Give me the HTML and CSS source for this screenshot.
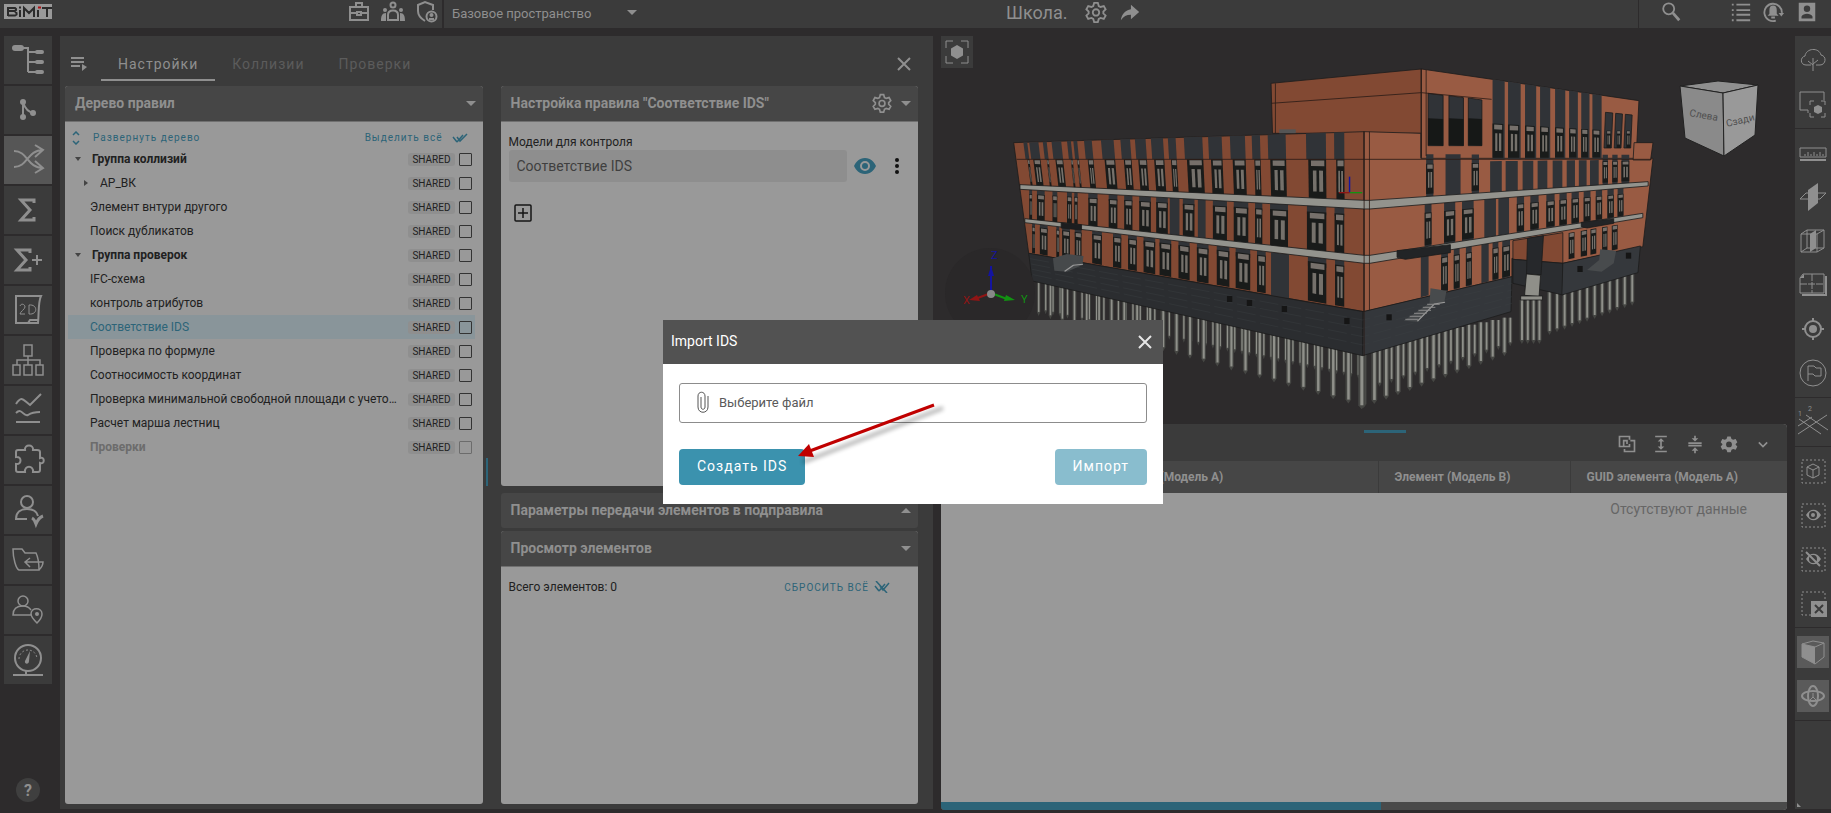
FILE: index.html
```html
<!DOCTYPE html>
<html lang="ru">

<head>
    <meta charset="utf-8">
    <title>BIMIT</title>
    <link rel="stylesheet" href="styles.css">
</head>

<body>
    <header class="topbar">
        <a class="logo" href="#" aria-label="BIMIT">
            <svg width="48" height="15" viewBox="0 0 48 15" fill="none" stroke="#2b2b2b" stroke-width="2">
                <path d="M4 3v9M4 4h7l1 1v1l-1 1H5M11 7.500l1.500 1.500v1.500L11 11.500H4M16 6v7M20 13V4l5 5 5-5v9M34 6v7M38 4h10M43 4v9" />
                <path d="M15 3.500h2" />
                <path d="M37 3.500h-3" stroke="#b01015" />
            </svg>
        </a>
        <nav class="top-left">
            <button class="tool" aria-label="Проекты"><svg viewBox="0 0 24 24" width="24" height="24"><path d="M3 8h18v13H3zM9 8V4h6v4M3 14h7M14 14h7M10 13h4v3h-4z" /></svg></button>
            <button class="tool" aria-label="Команда"><svg viewBox="0 0 24 24" width="24" height="24"><circle cx="12" cy="6" r="2.500" /><path d="M7 21v-5c0-3 2-4.500 5-4.500s5 1.500 5 4.500v5z" /><g class="fill"><circle cx="4" cy="11" r="2" /><circle cx="20" cy="11" r="2" /><path d="M0 22c0-5 1-8 5-8v8zM24 22c0-5-1-8-5-8v8z" /></g></svg></button>
            <button class="tool" aria-label="Права"><svg viewBox="0 0 24 24" width="24" height="24"><path d="M10 22C5 19 3 16 3 12V6l7-3 8 3v5" /><circle cx="16.500" cy="17.500" r="5" /><circle cx="16.500" cy="16" r="1" /><path d="M14 20h5" /></svg></button>
        </nav>
        <label class="space-select">
            <select aria-label="Пространство">
                <option>Базовое пространство</option>
            </select>
            <span class="caret"></span>
        </label>
        <div class="project">
            <span class="project-name">Школа.</span>
            <button class="tool" aria-label="Настройки проекта"><svg viewBox="0 0 24 24" width="24" height="24"><use href="#gear" /></svg></button>
            <button class="tool" aria-label="Поделиться"><svg class="fill" viewBox="0 0 24 24" width="24" height="24"><path d="M13 4l9 8-9 8v-5c-5 0-8 2-11 6 1-7 5-11 11-12z" /></svg></button>
        </div>
        <div class="top-right">
            <button class="tool" aria-label="Поиск"><svg viewBox="0 0 24 24" width="24" height="24"><circle cx="9.500" cy="8.500" r="6" /><path d="M14 13l7 8" stroke-width="3" /></svg></button>
            <span class="spring"></span>
            <button class="tool" aria-label="Список"><svg viewBox="0 0 24 24" width="24" height="24"><path d="M7 4h15M7 10h15M7 15h15M7 21h15M2 4h2M2 10h2M2 15h2M2 21h2" /></svg></button>
            <button class="tool" aria-label="Уведомления"><svg viewBox="0 0 24 24" width="24" height="24"><path d="M14 21.500A9.500 9.500 0 1 1 20.500 13" /><path class="fill" d="M17 13h6l-3 4zM11 5c-3 0-4 2-4 5v4l-2 2h12l-2-2v-4c0-3-1-5-4-5zM9 17h4v2H9z" /></svg></button>
            <button class="tool" aria-label="Профиль"><svg viewBox="0 0 24 24" width="24" height="24"><path class="fill" fill-rule="evenodd" d="M3 2h18v20H3zM12 5a3.500 3.500 0 1 0 0 7 3.500 3.500 0 0 0 0-7zM6 19h12v-2c-2-4-10-4-12 0z" /></svg></button>
        </div>
    </header>

    <main class="workspace">
        <aside class="rail">
            <button class="rail-btn" aria-label="Структура"><svg class="ic" viewBox="0 0 48 48"><path d="M16 12h8v24M24 16h8M24 26h8M24 36h8" stroke-width="2" /><path d="M11 12h6" stroke-width="6" stroke-linecap="round" /><path d="M33 16h5M33 26h5M33 36h5" stroke-width="4" stroke-linecap="round" /></svg></button>
            <button class="rail-btn" aria-label="Связи"><svg class="ic" viewBox="0 0 48 48"><path d="M19 16v16M19 16c2 7 5 11 12 11" stroke-width="2" /><g class="fill"><circle cx="19" cy="16" r="3" /><circle cx="19" cy="31" r="3" /><circle cx="29" cy="27" r="3" /></g></svg></button>
            <button class="rail-btn active" aria-label="Коллизии"><svg class="ic" viewBox="0 0 48 48"><path d="M10 15c14 0 13 17 29 17M10 31c14 0 13-17 29-17M31 9l8 5-8 7M31 25l8 7-8 5" stroke-width="2" /></svg></button>
            <button class="rail-btn" aria-label="Сумма"><svg class="ic" viewBox="0 0 48 48"><path d="M30 17v-3H17l9 10-9 10h13v-3" stroke-width="3" /></svg></button>
            <button class="rail-btn" aria-label="Сумма плюс"><svg class="ic" viewBox="0 0 48 48"><path d="M26 17v-3H13l9 10-9 10h13v-3" stroke-width="3" /><path d="M28 24h10M33 19v10" stroke-width="2" /></svg></button>
            <button class="rail-btn" aria-label="2D"><svg class="ic" viewBox="0 0 48 48"><path d="M12 10h25c-3 6-2 18-3 27H12zM34 34h-8l-2 3" stroke-width="2" /><path d="M16 20c1-3 5-2 5 1 0 2-5 5-5 7h5M25 19v9c9 1 9-10 0-9z" stroke-width="1" /></svg></button>
            <button class="rail-btn" aria-label="Схема"><svg class="ic thin" viewBox="0 0 48 48"><path d="M20 9h8v11h-8zM24 20v9M13 29v-5h23v5M9 29h7v10H9zM20 29h8v10h-8zM32 29h7v10h-7z" /></svg></button>
            <button class="rail-btn" aria-label="Графики"><svg class="ic" viewBox="0 0 48 48"><path d="M12 18c6-9 7-4 14 1l11-11M12 27c6-6 7 4 12 2 3-2 7-3 12-3M12 36h24" stroke-width="2" /></svg></button>
            <button class="rail-btn" aria-label="Модули"><svg class="ic" viewBox="0 0 48 48"><path d="M12 16c0-1 1-2 2-2h7c-1-6 9-6 8 0h4c2 0 3 1 3 2v6c5-2 5 7 0 5v7c0 1-1 2-2 2h-5c1-7-9-7-8 0h-7c-1 0-2-1-2-2v-6c6 1 6-8 0-7z" stroke-width="2" /></svg></button>
            <button class="rail-btn" aria-label="Согласование"><svg class="ic" viewBox="0 0 48 48"><circle cx="23" cy="16" r="6" /><path d="M23 33H12c0-7 5-10 11-10s10 3 11 7" stroke-width="2" /><path d="M28 32c2 1 3 3 4 6 2-5 4-7 7-8" stroke-width="3" /></svg></button>
            <button class="rail-btn" aria-label="Файлы"><svg class="ic thin" viewBox="0 0 48 48"><path d="M9 13h9l3 4h11c2 4 3 9 3 17H15c-3-1-6-12-6-21zM21 26h18c0 3-2 6-4 8M26 22l-5 4 5 5" /></svg></button>
            <button class="rail-btn" aria-label="Метки"><svg class="ic thin" viewBox="0 0 48 48"><circle cx="19" cy="15" r="5" /><path d="M28 29H9c0-6 4-9 10-9 4 0 6 1 8 4M33 37c-4-4-6-7-6-9 0-7 11-7 11 0 0 2-2 6-5 9z" /><circle class="fill" cx="33" cy="28" r="2" /></svg></button>
            <button class="rail-btn" aria-label="Дашборд"><svg class="ic" viewBox="0 0 48 48"><circle cx="24" cy="22" r="13" stroke-width="2" /><path d="M9 39h30M22 35v4" stroke-width="2" /><path d="M15 23a9 9 0 1 1 18 0" stroke-dasharray="2 2" stroke-width="1" /><path class="fill" d="M26 15l-5 10c-1 3 4 4 4 0z" /></svg></button>
            <button class="help">?</button>
        </aside>

        <section class="rules">
            <div class="tabs">
                <button class="menu-btn" aria-label="Меню"><svg viewBox="0 0 18 16" width="18" height="16"><path d="M0 3h13M0 7h13M0 11h9" /><path class="fill" d="M11 9l5 3-5 4z" /></svg></button>
                <button class="tab current">Настройки</button>
                <button class="tab">Коллизии</button>
                <button class="tab">Проверки</button>
                <button class="close" aria-label="Закрыть"><svg viewBox="0 0 14 14" width="14" height="14"><path d="M1 1l12 12M13 1L1 13" /></svg></button>
            </div>
            <div class="columns">
                <div class="card tree-card">
                    <h2 class="card-head">Дерево правил<span class="caret"></span></h2>
                    <div class="card-body">
                        <div class="tree-tools">
                            <button class="link-btn"><svg viewBox="0 0 8 14" width="8" height="14"><path d="M1 4l3-3 3 3M1 10l3 3 3-3" /></svg><span>Развернуть дерево</span></button>
                            <button class="link-btn"><span>Выделить всё</span><svg viewBox="0 0 16 10" width="16" height="10"><path d="M1 4l4 5M5 4l3 4 7-7M5 9l6-7" /></svg></button>
                        </div>
                        <ul class="tree">
                            <li class="node group"><i class="tw open"></i><label for="r1">Группа коллизий</label><span class="badge">SHARED</span><input type="checkbox" id="r1"></li>
                            <li class="node sub"><i class="tw"></i><label for="r2">АР_ВК</label><span class="badge">SHARED</span><input type="checkbox" id="r2"></li>
                            <li class="node"><label for="r3">Элемент внтури другого</label><span class="badge">SHARED</span><input type="checkbox" id="r3"></li>
                            <li class="node"><label for="r4">Поиск дубликатов</label><span class="badge">SHARED</span><input type="checkbox" id="r4"></li>
                            <li class="node group"><i class="tw open"></i><label for="r5">Группа проверок</label><span class="badge">SHARED</span><input type="checkbox" id="r5"></li>
                            <li class="node"><label for="r6">IFC-схема</label><span class="badge">SHARED</span><input type="checkbox" id="r6"></li>
                            <li class="node"><label for="r7">контроль атрибутов</label><span class="badge">SHARED</span><input type="checkbox" id="r7"></li>
                            <li class="node selected"><label for="r8">Соответствие IDS</label><span class="badge">SHARED</span><input type="checkbox" id="r8"></li>
                            <li class="node"><label for="r9">Проверка по формуле</label><span class="badge">SHARED</span><input type="checkbox" id="r9"></li>
                            <li class="node"><label for="r10">Соотносимость координат</label><span class="badge">SHARED</span><input type="checkbox" id="r10"></li>
                            <li class="node"><label for="r11">Проверка минимальной свободной площади с учето…</label><span class="badge">SHARED</span><input type="checkbox" id="r11"></li>
                            <li class="node"><label for="r12">Расчет марша лестниц</label><span class="badge">SHARED</span><input type="checkbox" id="r12"></li>
                            <li class="node disabled"><label for="r13">Проверки</label><span class="badge">SHARED</span><input type="checkbox" id="r13" disabled></li>
                        </ul>
                    </div>
                </div>
                <div class="splitter"></div>
                <div class="stack">
                    <div class="card rule-card">
                        <h2 class="card-head">Настройка правила "Соответствие IDS"
                            <button class="tool" aria-label="Параметры"><svg viewBox="0 0 24 24" width="24" height="24"><use href="#gear" /></svg></button><span class="caret"></span></h2>
                        <div class="card-body rule-body">
                            <label for="model">Модели для контроля</label>
                            <div class="model-row">
                                <input id="model" type="text" value="Соответствие IDS" readonly>
                                <button class="plain" aria-label="Показать"><svg viewBox="0 0 22 16" width="22" height="16"><path fill="#2c6478" fill-rule="evenodd" d="M11 0C5 0 2 4 0 8c2 4 5 8 11 8s9-4 11-8c-2-4-5-8-11-8zm0 3a5 5 0 1 1 0 10 5 5 0 0 1 0-10z" /><circle cx="11" cy="8" r="3" fill="#2c6478" /></svg></button>
                                <button class="plain" aria-label="Ещё"><svg viewBox="0 0 6 18" width="6" height="18" fill="#111"><circle cx="3" cy="3" r="2" /><circle cx="3" cy="9" r="2" /><circle cx="3" cy="15" r="2" /></svg></button>
                            </div>
                            <button class="plain add" aria-label="Добавить"><svg viewBox="0 0 18 18" width="18" height="18" fill="none" stroke="#161616"><rect x="1" y="1" width="16" height="16" rx="1" stroke-width="1.500" /><path d="M4 9h10M9 4v10" stroke-width="1.500" /></svg></button>
                        </div>
                    </div>
                    <div class="card closed-card">
                        <h2 class="card-head">Параметры передачи элементов в подправила<span class="caret up"></span></h2>
                    </div>
                    <div class="card view-card">
                        <h2 class="card-head">Просмотр элементов<span class="caret"></span></h2>
                        <div class="card-body view-body">
                            <span>Всего элементов: 0</span>
                            <button class="link-btn upper"><span>СБРОСИТЬ ВСЁ</span><svg viewBox="0 0 16 12" width="16" height="12"><path d="M1 5l4 5M6 5l3 4 6-7M5 10l6-7M2 0l11 12" /></svg></button>
                        </div>
                    </div>
                </div>
            </div>
        </section>

        <section class="viewer">
            <div class="scene">
                <button class="focus" aria-label="Фокус"><svg viewBox="0 0 32 32" width="32" height="32"><path d="M5 12V5h7M20 5h7v7M27 20v7h-7M12 27H5v-7" /><path class="fill" d="M16 9l6 3.500v7L16 23l-6-3.500v-7z" /></svg></button>
                <svg id="model3d" class="model" width="890" height="388" viewBox="0 0 890 388">
                    <g id="building" transform="translate(-1 14) scale(.4847 .3333)"></g>
                    <g id="cube" transform="translate(-941 -36)" stroke="#222" stroke-width="1">
                        <path d="M1680 86l38-5 40 4-35 8z" fill="#8f8f8f" />
                        <path d="M1680 86l43 7 1 63-39-18z" fill="#8a8a8a" />
                        <path d="M1723 93l35-8-3 50-31 21z" fill="#999" />
                        <g stroke="none" fill="#505050" font-size="10" font-family="Roboto, sans-serif">
                            <text transform="translate(1689 116) rotate(10)">Слева</text>
                            <text transform="translate(1727 127) rotate(-14)">Сзади</text>
                        </g>
                    </g>
                    <g transform="translate(-941 -36)" font-size="11" font-family="Roboto, sans-serif" stroke-width="2">
                        <circle cx="990" cy="293" r="45" fill="#2a2829" />
                        <path d="M991 292v-26" stroke="#1414a0" /><path d="M991 266l-3 10h6z" fill="#1414a0" />
                        <path d="M991 293l-16 6" stroke="#8f1515" /><path d="M969 300l8-5 3 6z" fill="#8f1515" />
                        <path d="M991 293l16 6" stroke="#129212" /><path d="M1015 300l-9-5-2 6z" fill="#129212" />
                        <circle cx="991" cy="294" r="4" fill="#888" />
                        <text x="991" y="259" fill="#1414a0">Z</text>
                        <text x="963" y="304" fill="#8f1515">X</text>
                        <text x="1021" y="303" fill="#129212">Y</text>
                    </g>
                </svg>
            </div>
            <div class="results">
                <div class="results-tools">
                    <span class="handle"></span>
                    <button class="tool" aria-label="Группы"><svg viewBox="0 0 24 24" width="24" height="24"><path d="M8 15H3V3h12v4M12 12V8H8v7h7v-3M16 8h5v13H9v-3" /></svg></button>
                    <button class="tool" aria-label="Развернуть"><svg viewBox="0 0 24 24" width="24" height="24"><path d="M5 3h14M5 21h14M12 7v10" /><path class="fill" d="M12 5l4 4H8zM12 19l4-4H8z" /></svg></button>
                    <button class="tool" aria-label="Свернуть"><svg viewBox="0 0 24 24" width="24" height="24"><path d="M4 11h16M4 14h16M12 2v4M12 23v-4" /><path class="fill" d="M12 9l4-4H8zM12 16l4 4H8z" /></svg></button>
                    <button class="tool" aria-label="Настройки таблицы"><svg viewBox="0 0 24 24" width="24" height="24"><path class="fill" fill-rule="evenodd" d="M10 3h4l1 3 2 1 3-1 2 4-2 2v1l2 2-2 4-3-1-2 1-1 3h-4l-1-3-2-1-3 1-2-4 2-2v-1l-2-2 2-4 3 1 2-1zM12 9a3 3 0 1 0 0 7 3 3 0 0 0 0-7z" /></svg></button>
                    <button class="tool" aria-label="Скрыть"><svg viewBox="0 0 24 24" width="24" height="24"><path d="M7 10l5 5 5-5" /></svg></button>
                </div>
                <table>
                    <thead>
                        <tr>
                            <th class="col-num"></th>
                            <th class="col-a">Элемент (Модель A)</th>
                            <th class="col-b">Элемент (Модель B)</th>
                            <th>GUID элемента (Модель A)</th>
                        </tr>
                    </thead>
                    <tbody>
                        <tr>
                            <td colspan="4">Отсутствуют данные</td>
                        </tr>
                    </tbody>
                </table>
                <div class="hscroll"><span></span></div>
            </div>
        </section>

        <aside class="view-tools">
            <div class="vt-group">
                <button aria-label="Дерево"><svg class="vt" viewBox="0 0 32 32"><path d="M16 27V14M16 21l-5-4M16 20l5-4M14 21H9c-6 0-6-8-1-9 1-8 14-9 16-1 6 1 5 10-1 10h-4" /></svg></button>
                <button aria-label="Выбор"><svg class="vt" viewBox="0 0 32 32"><path d="M27 12V4H3v18h8v3M13 17v-4h4M24 13h4v4M28 25v4h-4M17 29h-4v-4" /><path class="fill" d="M21 17l4 2v5l-4 2-4-2v-5z" /></svg></button>
            </div>
            <div class="vt-group">
                <button aria-label="Линейка"><svg class="vt" viewBox="0 0 32 32"><path d="M3 11h26v9H3zM8 19v-2M11 19v-4M14 19v-2M17 19v-4M20 19v-2M23 19v-4M26 19v-2" /><path d="M3 23h26" stroke-width="2" /></svg></button>
                <button aria-label="Сечение"><svg class="vt" viewBox="0 0 32 32"><path d="M3 18h20l6-6H9z" /><path class="fill" d="M11 9l10-7v20l-10 8z" /></svg></button>
                <button aria-label="Объём"><svg class="vt" viewBox="0 0 32 32"><path d="M4 9h16v18H4zM10 5h17v18H10M4 9l6-4v18l-6 4M20 9l7-4M20 27l7-4" /><path class="fill" d="M13 9l6-4v18l-6 4z" /></svg></button>
                <button aria-label="План"><svg class="vt" viewBox="0 0 32 32"><path d="M6 5h21v19H3V9z" /><path d="M3 15h24M15 5v19" stroke-dasharray="7 1" /><path d="M5 26h24V7" stroke-width="2" /><path class="fill" d="M3 9l4-4v4z" /></svg></button>
                <button aria-label="Центр"><svg class="vt" viewBox="0 0 32 32"><circle cx="16" cy="16" r="8" stroke-width="2" /><circle class="fill" cx="16" cy="16" r="4" /><path d="M16 5v4M16 23v4M5 16h4M23 16h4" stroke-width="2" /></svg></button>
                <button aria-label="Замечание"><svg class="vt" viewBox="0 0 32 32"><circle cx="16" cy="16" r="13" /><path d="M11 24V9h6l2 2h5v8h-6l-2-2h-5" /></svg></button>
            </div>
            <div class="vt-group">
                <button aria-label="Оси"><svg class="vt" viewBox="0 0 32 32"><path d="M2 13l22 15M9 9l22 15M1 28l29-19M1 20l14-9" /><text x="1" y="10">1</text><text x="11" y="5">2</text></svg></button>
            </div>
            <div class="vt-group">
                <button aria-label="Изолировать"><svg class="vt" viewBox="0 0 32 32"><rect class="dash" x="5" y="5" width="23" height="23" /><path d="M16 9l6 3v8l-6 3-6-3v-8zM10 12l6 3 6-3M16 15v8" /></svg></button>
                <button aria-label="Показать всё"><svg class="vt" viewBox="0 0 32 32"><rect class="dash" x="5" y="5" width="23" height="23" /><path class="fill" fill-rule="evenodd" d="M9 16c4-7 11-7 15 0-4 7-11 7-15 0zM16 12a4 4 0 1 0 0 8 4 4 0 0 0 0-8z" /><circle class="fill" cx="16" cy="16" r="2" /></svg></button>
                <button aria-label="Скрыть выбранное"><svg class="vt" viewBox="0 0 32 32"><rect class="dash" x="5" y="5" width="23" height="23" /><path class="fill" fill-rule="evenodd" d="M9 16c4-7 11-7 15 0-4 7-11 7-15 0zM16 12a4 4 0 1 0 0 8 4 4 0 0 0 0-8z" /><path d="M9 9l14 14" stroke-width="2" /></svg></button>
                <button aria-label="Сбросить"><svg class="vt" viewBox="0 0 32 32"><rect class="dash" x="5" y="5" width="23" height="23" /><path class="fill" d="M14 14h16v16H14z" /><path d="M18 18l8 8M26 18l-8 8" stroke="#3b3b3b" stroke-width="2" /></svg></button>
            </div>
            <div class="vt-group">
                <button class="active" aria-label="Куб"><svg class="vt" viewBox="0 0 32 32"><path d="M5 8l11-3 11 2-9 4zM5 8v13l13 7M27 7v14l-9 7" /><path class="fill" d="M5 8l13 3v17L5 21z" /></svg></button>
                <button class="active" aria-label="Вращение"><svg class="vt" viewBox="0 0 32 32"><ellipse cx="16" cy="16" rx="11" ry="5" stroke-width="2" /><ellipse cx="16" cy="16" rx="5" ry="10" stroke-width="2" /><path d="M16 13v4l-3 3M16 17l3 3" /></svg></button>
            </div>
            <span class="corner"></span>
        </aside>
    </main>

    <div class="overlay">
        <div class="dialog" role="dialog" aria-label="Import IDS">
            <div class="dialog-head">
                <span>Import IDS</span>
                <button class="close" aria-label="Закрыть"><svg viewBox="0 0 14 14" width="14" height="14"><path d="M1 1l12 12M13 1L1 13" /></svg></button>
            </div>
            <div class="dialog-body">
                <label class="file-field">
                    <svg viewBox="0 0 12 22" width="12" height="22" fill="none" stroke="#555"><path d="M11 5v11c0 7-10 7-10 0V5c0-5 7-5 7 0v11c0 3-4 3-4 0V6" /></svg>
                    <span>Выберите файл</span>
                    <input type="file">
                </label>
                <div class="actions">
                    <button class="btn">Создать IDS</button>
                    <button class="btn muted">Импорт</button>
                </div>
            </div>
            <svg class="pointer" width="148" height="64" viewBox="0 0 148 64">
                <path class="shade" d="M10 61l140-54" />
                <path class="shaft" d="M14 51l127-47" />
                <path class="tip" d="M5 55l11-12 5 13z" />
            </svg>
        </div>
    </div>

    <svg class="defs" width="0" height="0">
        <defs>
            <g id="gear"><path d="M10 2h4l1 3.500 2 1 3.500-1 2 3.500-2.500 2.500v2l2.500 2.500-2 3.500-3.500-1-2 1-1 3.500h-4l-1-3.500-2-1-3.500 1-2-3.500L4 13.500v-2L1.500 9l2-3.500 3.500 1 2-1z" /><circle cx="12" cy="12.500" r="3.500" /></g>
        </defs>
    </svg>
    <script src="building.js"></script>
</body>

</html>
```

FILE: styles.css
```css
* {
    box-sizing: border-box;
}

body {
    margin: 0;
    height: 100vh;
    display: flex;
    flex-direction: column;
    overflow: hidden;
    background: #2d2b2c;
    color: #8f8f8f;
    font-family: Roboto, "Liberation Sans", sans-serif;
    font-size: 12px;
}

button {
    padding: 0;
    border: none;
    background: none;
    color: inherit;
    font: inherit;
    cursor: pointer;
}

svg {
    display: block;
}

.defs {
    position: absolute;
}

.tool,
.ic,
.vt,
.menu-btn,
.close,
.focus {
    fill: none;
    stroke: #8f8f8f;
    stroke-width: 2;
}

.fill,
.fill * {
    fill: #8f8f8f;
    stroke: none;
}

.caret {
    border: 5px solid transparent;
    border-top-color: #8f8f8f;
    border-bottom: none;
}

.caret.up {
    border-top: none;
    border-bottom: 5px solid #8f8f8f;
}

/* top bar */

.topbar {
    flex: none;
    display: flex;
    height: 28px;
    background: #3b3b3b;
}

.logo {
    width: 48px;
    height: 15px;
    margin: 4px 0 0 4px;
    background: #999;
}

.top-left {
    display: flex;
    align-items: center;
    gap: 10px;
    margin-left: 295px;
    padding: 0 3px 6px 0;
    border-right: 2px solid #2d2b2c;
}

.space-select {
    display: flex;
    align-items: center;
    width: 200px;
    padding: 0 0 2px 8px;
}

.space-select select {
    flex: 1;
    padding: 0;
    appearance: none;
    border: none;
    background: none;
    color: #8f8f8f;
    font: 13px Roboto, "Liberation Sans", sans-serif;
}

.space-select .caret {
    margin-bottom: 2px;
    margin-right: 7px;
}

.project {
    flex: 1;
    display: flex;
    align-items: center;
    gap: 12px;
    padding: 0 0 4px 362px;
    font-size: 18px;
}

.project-name {
    margin-right: 5px;
}

.project .tool svg,
.top-right .tool svg {
    width: 22px;
    height: 22px;
}

.top-right {
    display: flex;
    align-items: center;
    gap: 11px;
    width: 193px;
    padding: 0 13px 4px 21px;
    border-left: 1px solid #2d2b2c;
}

.spring {
    flex: 1;
}

/* left rail */

.workspace {
    flex: 1;
    display: flex;
    min-height: 0;
    padding-top: 8px;
}

.rail {
    display: flex;
    flex-direction: column;
    align-items: center;
    gap: 2px;
    width: 48px;
    margin: 0 8px 11px 4px;
}

.rail-btn {
    width: 48px;
    height: 48px;
    background: #3b3b3b;
}

.rail-btn.active {
    background: #565656;
}

.ic.thin {
    stroke-width: 1.5;
}

.help {
    width: 24px;
    height: 24px;
    margin-top: auto;
    border-radius: 50%;
    background: #3f3f3f;
    font-size: 16px;
    font-weight: 700;
}

/* rules panel */

.rules {
    flex: 853;
    display: flex;
    flex-direction: column;
    min-width: 0;
    margin-bottom: 4px;
    padding: 0 15px 5px 5px;
    background: #3b3b3b;
}

.tabs {
    display: flex;
    align-items: center;
    height: 50px;
    padding-left: 6px;
}

.menu-btn {
    margin: 4px 12px 0 0;
}

.tab {
    height: 32px;
    margin-top: 8px;
    padding: 0 17px;
    border-bottom: 2px solid transparent;
    color: #5c5c5c;
    font-size: 14px;
    letter-spacing: 1px;
    line-height: 16px;
}

.tab.current {
    border-color: #8f8f8f;
    color: #8f8f8f;
}

.close {
    margin: 6px 7px 0 auto;
}

.columns {
    flex: 1;
    display: flex;
    min-height: 0;
}

.card {
    display: flex;
    flex-direction: column;
    overflow: hidden;
    border-radius: 3px;
    background: #999;
    color: #212121;
}

.tree-card,
.stack {
    flex: 1;
    min-width: 0;
}

.card-head {
    flex: none;
    display: flex;
    align-items: center;
    height: 36px;
    margin: 0;
    padding: 0 7px 1px 10px;
    border-bottom: 1px solid #707070;
    background: #464646;
    color: #8f8f8f;
    font-size: 14px;
    font-weight: 700;
}

.card-head .caret {
    margin-left: auto;
}

.card-head .tool {
    margin-left: auto;
}

.card-head .tool svg {
    width: 20px;
    height: 20px;
}

.card-head .tool + .caret {
    margin-left: 9px;
}

.splitter {
    width: 2px;
    height: 28px;
    margin: 372px 13px 0 3px;
    background: #2c6478;
}

.tree-card .card-body {
    padding: 6px 8px 0 3px;
}

.tree-tools {
    display: flex;
    justify-content: space-between;
    height: 19px;
    padding: 0 7px 0 4px;
}

.link-btn {
    display: flex;
    align-items: center;
    gap: 9px;
    color: #2c6478;
    font-size: 10px;
    letter-spacing: 1px;
}

.link-btn svg {
    fill: none;
    stroke: #2c6478;
    stroke-width: 1.5;
}

.link-btn:first-child {
    gap: 13px;
}

.tree {
    margin: 0;
    padding: 0;
    list-style: none;
}

.node {
    display: flex;
    align-items: center;
    height: 24px;
    padding: 0 3px 0 22px;
}

.node label {
    flex: 1;
    overflow: hidden;
    white-space: nowrap;
    text-overflow: ellipsis;
}

.node.group {
    padding-left: 7px;
    font-weight: 700;
}

.node.sub {
    padding-left: 16px;
}

.tw {
    width: 4px;
    margin-right: 12px;
    border: 3px solid transparent;
    border-left: 4px solid #444;
    border-right: none;
}

.tw.open {
    width: 6px;
    margin-right: 11px;
    border: 3px solid transparent;
    border-top: 4px solid #444;
    border-bottom: none;
}

.badge {
    margin: 0 4px;
    padding: 0 4px;
    border-radius: 3px;
    background: #8f8f8f;
    font-size: 10px;
    font-weight: 400;
    line-height: 13px;
}

.node input {
    width: 13px;
    height: 13px;
    margin: 0;
    appearance: none;
    border: 1px solid #333;
    border-radius: 1px;
}

.node.selected {
    background: #89959a;
}

.node.selected label {
    color: #2c6478;
}

.node.disabled label {
    color: #6c6c6c;
    font-weight: 700;
}

.node input:disabled {
    border-color: #6c6c6c;
}

/* right stack */

.stack {
    display: flex;
    flex-direction: column;
}

.rule-card {
    flex: 400;
}

.view-card {
    flex: 273;
}

.closed-card {
    margin: 7px 0 3px;
}

.closed-card .card-head {
    height: 35px;
    border: none;
}

.rule-body {
    padding: 13px 18px 0 8px;
}

.model-row {
    display: flex;
    align-items: center;
    justify-content: space-between;
    margin-top: 1px;
}

.model-row input {
    flex: 1;
    height: 32px;
    margin-right: 7px;
    padding: 0 8px;
    border: none;
    border-radius: 3px;
    background: #8e8e8e;
    color: #3f3f3f;
    font: 14px Roboto, "Liberation Sans", sans-serif;
}

.model-row .plain + .plain {
    margin-left: 18px;
}

.add {
    margin: 22px 0 0 5px;
}

.view-body {
    display: flex;
    justify-content: space-between;
    padding: 13px 28px 0 8px;
}

.link-btn.upper {
    gap: 5px;
}

/* viewer */

.viewer {
    flex: 846;
    display: flex;
    flex-direction: column;
    min-width: 0;
    margin: 0 8px 3px;
}

.scene {
    position: relative;
    flex: 388;
    min-height: 0;
}

.focus {
    width: 32px;
    height: 32px;
    background: #3b3b3b;
    stroke-width: 1;
}

.model {
    position: absolute;
    top: 0;
    left: 0;
}

.results {
    flex: 386;
    display: flex;
    flex-direction: column;
    overflow: hidden;
    border-radius: 4px;
    background: #999;
}

.results-tools {
    position: relative;
    display: flex;
    align-items: center;
    justify-content: flex-end;
    gap: 14px;
    height: 37px;
    padding: 2px 14px 0 0;
    background: #3b3b3b;
}

.results-tools .tool svg {
    width: 20px;
    height: 20px;
}

.handle {
    position: absolute;
    top: 6px;
    left: 50%;
    width: 42px;
    height: 3px;
    background: #2c6478;
}

.results table {
    width: 100%;
    border-collapse: collapse;
    table-layout: fixed;
}

.results th {
    height: 32px;
    padding: 0 16px;
    border-right: 1px solid #3b3b3b;
    background: #464646;
    font-size: 12px;
    text-align: left;
}

.results th:last-child {
    border: none;
}

.results .col-num {
    width: 150px;
    border: none;
}

.col-a {
    width: 287px;
}

.col-b {
    width: 192px;
}

.results td {
    height: 32px;
    padding: 0 40px 0 0;
    color: #666;
    font-size: 14px;
    text-align: right;
}

.hscroll {
    height: 8px;
    margin-top: auto;
    background: #4a4a4a;
}

.hscroll span {
    display: block;
    width: 52%;
    height: 8px;
    background: #2c6478;
}

/* view tools */

.view-tools {
    width: 36px;
    margin-bottom: 4px;
    display: flex;
    flex-direction: column;
    background: #3b3b3b;
}

.vt-group {
    display: flex;
    flex-direction: column;
    align-items: center;
    gap: 12px;
    padding: 8px 0;
    border-bottom: 1px solid #2d2b2c;
}

.vt-group button {
    width: 32px;
    height: 32px;
}

.vt-group .active {
    background: #5a5a5a;
}

.vt {
    stroke-width: 1;
}

.vt text {
    fill: #8f8f8f;
    stroke: none;
    font-size: 7px;
}

.vt .dash {
    stroke-dasharray: 2 2;
}

.corner {
    width: 4px;
    margin: auto 0 2px 2px;
    border-left: 4px solid #8f8f8f;
    border-top: 4px solid transparent;
}

/* import dialog */

.overlay {
    position: fixed;
    inset: 0;
    display: flex;
    align-items: center;
    justify-content: center;
    padding: 11px 5px 0 0;
}

.dialog {
    position: relative;
    width: 500px;
    background: #fff;
}

.dialog-head {
    display: flex;
    align-items: center;
    height: 44px;
    padding: 0 4px 2px 8px;
    background: #525252;
    color: #fff;
    font-size: 14px;
}

.dialog-head .close {
    margin-top: 2px;
    stroke: #e6e6e6;
}

.dialog-body {
    padding: 19px 16px;
}

.file-field {
    display: flex;
    align-items: center;
    gap: 10px;
    height: 40px;
    padding: 0 0 2px 17px;
    border: 1px solid #8c8c8c;
    border-radius: 3px;
    color: #5a5a5a;
    font-size: 13px;
}

.file-field input {
    display: none;
}

.actions {
    display: flex;
    justify-content: space-between;
    margin-top: 26px;
}

.btn {
    height: 36px;
    padding: 0 18px 2px;
    border-radius: 4px;
    background: #3b92ae;
    color: #fff;
    font-size: 14px;
    letter-spacing: 1px;
}

.btn.muted {
    background: #89bdce;
}

.pointer {
    position: absolute;
    left: 130px;
    top: 81px;
    overflow: visible;
}

.shaft {
    stroke: #c00000;
    stroke-width: 3;
}

.tip {
    fill: #c00000;
}

.shade {
    stroke: #000;
    stroke-width: 4;
    opacity: .3;
    filter: blur(2px);
}
```

FILE: building.js
```js
var out = [];

function poly(points, fill, line) {
    out.push('<polygon points="' + points + '" fill="' + fill + '"' +
        (line ? ' stroke="#1c1c1c" stroke-width="2"' : '') + '/>');
}

function lerp(a, b, t) {
    return a + (b - a) * t;
}

// line: [x1, y1, x2, y2], returns y at x
function yAt(line, x) {
    return lerp(line[1], line[3], (x - line[0]) / (line[2] - line[0]));
}

// vertical strip between two sloped lines, f and t are parts of its height
function strip(x1, x2, top, bottom, lean, fill, f, t) {
    function p(x, k) {
        return (x + lean(x) * k) + ',' + lerp(yAt(top, x), yAt(bottom, x), k);
    }
    poly([p(x1, f), p(x2, f), p(x2, t), p(x1, t)].join(' '), fill);
}

function win(x1, x2, top, bottom, lean, f, t) {
    var w = x2 - x1;
    strip(x1, x2, top, bottom, lean, '#191b1a', f, t);
    strip(x1 + w * .15, x2 - w * .1, top, bottom, lean, '#76706b', lerp(f, t, .03), lerp(f, t, .17));
    strip(x1 + w * .25, x1 + w * .45, top, bottom, lean, '#75716b', lerp(f, t, .28), lerp(f, t, .8));
    strip(x1 + w * .6, x1 + w * .82, top, bottom, lean, '#75716b', lerp(f, t, .28), lerp(f, t, .8));
}

function pile(x, y1, y2, w) {
    poly([x, y1, x + w, y1, x + w, y2 - 12, x + w / 2, y2, x, y2 - 12].join(' '), '#454643');
    poly([x + w * .3, y1, x + w * .75, y1, x + w * .75, y2 - 12, x + w * .3, y2 - 12].join(' '), '#8f908a');
}

var i, x;
var BRICK = '#824933', BRICK_LIGHT = '#995b43', DARK = '#303337';

// piles
for (i = 0; i < 44; i++) {
    x = 215 + i * 15;
    pile(x, 690 + (x - 190) * .31, 790 + (x - 205) * .3, 6);
}
for (i = 0; i < 25; i++) {
    x = 200 + i * 24 + i * i * .16;
    pile(x, 690 + (x - 190) * .31, 800 + (x - 205) * .413, 7 + i * .2);
}
pile(863, 900, 1078, 14);
for (i = 0; i < 12; i++) {
    x = 890 + i * 24.500;
    pile(x, 880 - i * 7, 1062 - i * 13, 12 - i * .2);
    pile(x + 13, 880 - i * 7, 1010 - i * 11, 8);
}
for (i = 0; i < 4; i++) pile(1196 + i * 12, 750, 882, 9);
for (i = 0; i < 12; i++) pile(1253 + i * 15.500, 725 - i * 5, 855 - i * 8, 9);

// upper block
poly('683,100 993,57 993,250 686,250', BRICK, true);
poly('993,57 1442,152 1436,330 993,330', BRICK_LIGHT, true);
poly('700,238 734,238 734,250 700,250', '#555');

// long facade
poly('152,278 875,245 875,785 183,610', BRICK, true);
poly('875,245 992,250 992,325 1471,325 1450,590 1285,640 1180,625 1180,680 875,785', BRICK_LIGHT, true);
poly('1432,278 1471,278 1466,330 1430,330', BRICK_LIGHT, true);

var lean = function () { return 0; };
var L = function (x) { return 12 * (875 - x) / 723; };
var roof = [152, 278, 875, 245], b1 = [165, 411, 875, 455], b1b = [165, 418, 875, 475];
var b2 = [175, 508, 875, 618], b2b = [175, 518, 875, 640], base = [183, 610, 875, 785];

[[172, 180], [184, 203], [212, 220], [230, 250], [262, 270], [275, 283], [297, 313], [332, 358],
[372, 392], [402, 424], [435, 460], [470, 486], [503, 541], [553, 581], [598, 629], [643, 660],
[676, 713], [755, 796], [813, 834]].forEach(function (s) {
    var k = (328 - yAt(roof, s[0])) / (yAt(b1, s[0]) - yAt(roof, s[0]));
    strip(s[0], s[1], roof, b1, L, DARK, 0, k);
    win(s[0] + 4, s[1], roof, b1, L, k, 1);
});
[[184, 190], [200, 216], [232, 242], [262, 272], [277, 284], [306, 325], [348, 366], [380, 397],
[411, 435], [446, 470], [474, 494], [501, 525], [532, 548], [563, 592], [606, 636], [650, 665],
[681, 718], [757, 797], [814, 834]].forEach(function (s, n) {
    if (n === 10 || n === 12) {
        strip(s[0], s[1], b1b, b2, lean, DARK, 0, 1);
        return;
    }
    strip(s[0], s[1], b1b, b2, lean, DARK, 0, .2);
    win(s[0], s[1], b1b, b2, lean, .14, 1);
});
[[190, 196], [206, 222], [240, 246], [252, 268], [278, 292], [314, 334], [357, 374], [388, 406],
[420, 444], [453, 477], [492, 515], [530, 554], [571, 597], [610, 640], [654, 672], [683, 720],
[759, 797], [815, 834]].forEach(function (s, n) {
    if (n === 15) {
        strip(s[0], s[1], b2b, base, lean, DARK, 0, 1);
        return;
    }
    strip(s[0], s[1], b2b, base, lean, DARK, 0, .2);
    win(s[0], s[1], b2b, base, lean, .1, .97);
});

// right facade
var top2 = [993, 57, 1442, 152], mid = [993, 330, 1471, 325];
var r1 = [887, 455, 1461, 397], r1b = [887, 476, 1461, 408];
var r2 = [887, 618, 1450, 492], r2b = [887, 638, 1450, 503], rb = [875, 785, 1180, 682];
[[1140, 1165], [1172, 1198], [1207, 1230], [1238, 1259], [1269, 1290], [1298, 1316],
[1323, 1340], [1346, 1365]].forEach(function (s) {
    strip(s[0], s[1], top2, mid, lean, DARK, 0, 1);
    win(s[0], s[1] - 3, top2, mid, lean, .55, .98);
    strip(s[0] - 5, s[1] - 6, mid, r1, lean, DARK, .05, 1);
});
[[1007, 1038], [1050, 1080], [1090, 1118]].forEach(function (s, n) {
    poly([s[0], 130 + n * 7, s[1], 136 + n * 7, s[1], 287, s[0], 287].join(' '), DARK, true);
    poly([s[0], 205, s[1], 207, s[1], 287, s[0], 285].join(' '), '#161817');
});
[[1373, 1388], [1394, 1408], [1414, 1428]].forEach(function (s, n) {
    poly([s[0], 187 + n * 3, s[1], 189 + n * 3, s[1] - 3, 294, s[0] - 3, 294].join(' '), DARK, true);
    win(s[0] + 2, s[1] - 4, [0, 190, 2000, 190], [0, 294, 2000, 294], lean, .5, 1);
});
[[1003, 1018], [1043, 1074], [1097, 1112], [1367, 1378], [1387, 1398], [1406, 1422]].forEach(function (s, n) {
    strip(s[0], s[1], mid, r1, lean, DARK, -.15, 1);
    if (n !== 1) win(s[0], s[1], mid, r1, lean, .1, .9);
});
[[1000, 1014], [1040, 1063], [1077, 1101], [1123, 1147], [1152, 1174], [1190, 1205], [1218, 1235],
[1251, 1268], [1278, 1293], [1303, 1318], [1328, 1342], [1353, 1366], [1377, 1390], [1398, 1410]
].forEach(function (s, n) {
    strip(s[0], s[1], r1b, r2, lean, DARK, 0, 1);
    if (n !== 3 && n !== 4) win(s[0], s[1], r1b, r2, lean, .2, .95);
});
[[992, 1008], [1034, 1048], [1060, 1072], [1085, 1097], [1117, 1132], [1140, 1152], [1160, 1176]
].forEach(function (s, n) {
    strip(s[0], s[1], r2b, rb, lean, DARK, 0, .97);
    if (n && n !== 4) win(s[0], s[1], r2b, rb, lean, .15, .95);
});

// passage and right wing
poly('1182,572 1285,548 1285,640 1182,628', BRICK, true);
poly('1182,628 1285,640 1285,735 1182,700', '#2b2d30', true);
poly('1285,640 1445,588 1440,668 1283,735', '#35383c', true);
[[1297, 1309], [1322, 1335], [1342, 1354], [1366, 1377], [1386, 1398]].forEach(function (s) {
    win(s[0], s[1], r2b, [1285, 636, 1445, 588], lean, .1, .95);
});
poly('1212,565 1245,557 1240,675 1210,672', '#26282b', true);
poly('1210,672 1239,676 1236,740 1206,736', '#8f8f89', true);
poly('1198,738 1243,738 1243,750 1198,750', '#8f8f89', true);

// plinth
poly('183,610 873,785 872,917 190,693', '#2b2d30', true);
poly('873,785 1180,680 1178,785 872,917', '#34373b', true);
for (i = 1; i < 5; i++) {
    out.push('<path d="M' + (184 + i * 2) + ' ' + (610 + i * 16) + 'L872 ' + (785 + i * 25) +
        'L1180 ' + (680 + i * 20) + '" fill="none" stroke="#3c4043" stroke-dasharray="40 9"/>');
}
[[592, 738], [633, 750], [705, 768], [834, 804], [921, 793], [1315, 648], [1415, 608]].forEach(function (p) {
    out.push('<rect x="' + p[0] + '" y="' + p[1] + '" width="11" height="18" fill="#151515"/>');
});
poly('233,625 262,612 296,618 294,645 262,665 236,662', '#46494b');
poly('1012,715 1045,722 1040,760 1018,765 985,815 957,812 1010,760', '#484b4d');
out.push('<path d="M1042 757l-22 5-35 52M295 643l-20 3-18 18" fill="none" stroke="#999" stroke-width="3"/>');
for (i = 0; i < 6; i++) {
    out.push('<path d="M' + (960 + i * 9) + ' ' + (808 - i * 9) + 'h26" stroke="#8a8a8a" stroke-width="3"/>');
}
poly('1362,598 1395,602 1390,640 1365,665 1335,660 1360,630', '#484b4d');

// cornices
poly('165,404 875,451 887,451 1461,395 1461,408 887,477 875,477 165,418', '#93938d', true);
poly('175,506 875,616 887,616 1450,490 1450,503 887,640 875,640 175,518', '#93938d', true);
out.push('<path d="M158 328H1468M683 160L993 128 1138 148M875 245V917M886 245V780M993 57V320M1003 60V318M692 100V250" fill="none" stroke="#2a1b16" stroke-width="2"/>');
poly('250,518 292,524 292,540 250,534', '#1c1d1f', true);
poly('943,602 1053,584 1053,608 960,628 943,622', '#222426', true);
poly('1323,517 1390,506 1390,520 1335,534 1323,530', '#222426', true);
out.push('<path d="M845 380v48" stroke="#1414a0" stroke-width="3"/><path d="M845 428h26" stroke="#129212" stroke-width="4"/><path d="M845 428h-22" stroke="#8f1515" stroke-width="4"/>');

document.getElementById('building').innerHTML = out.join('');
```
